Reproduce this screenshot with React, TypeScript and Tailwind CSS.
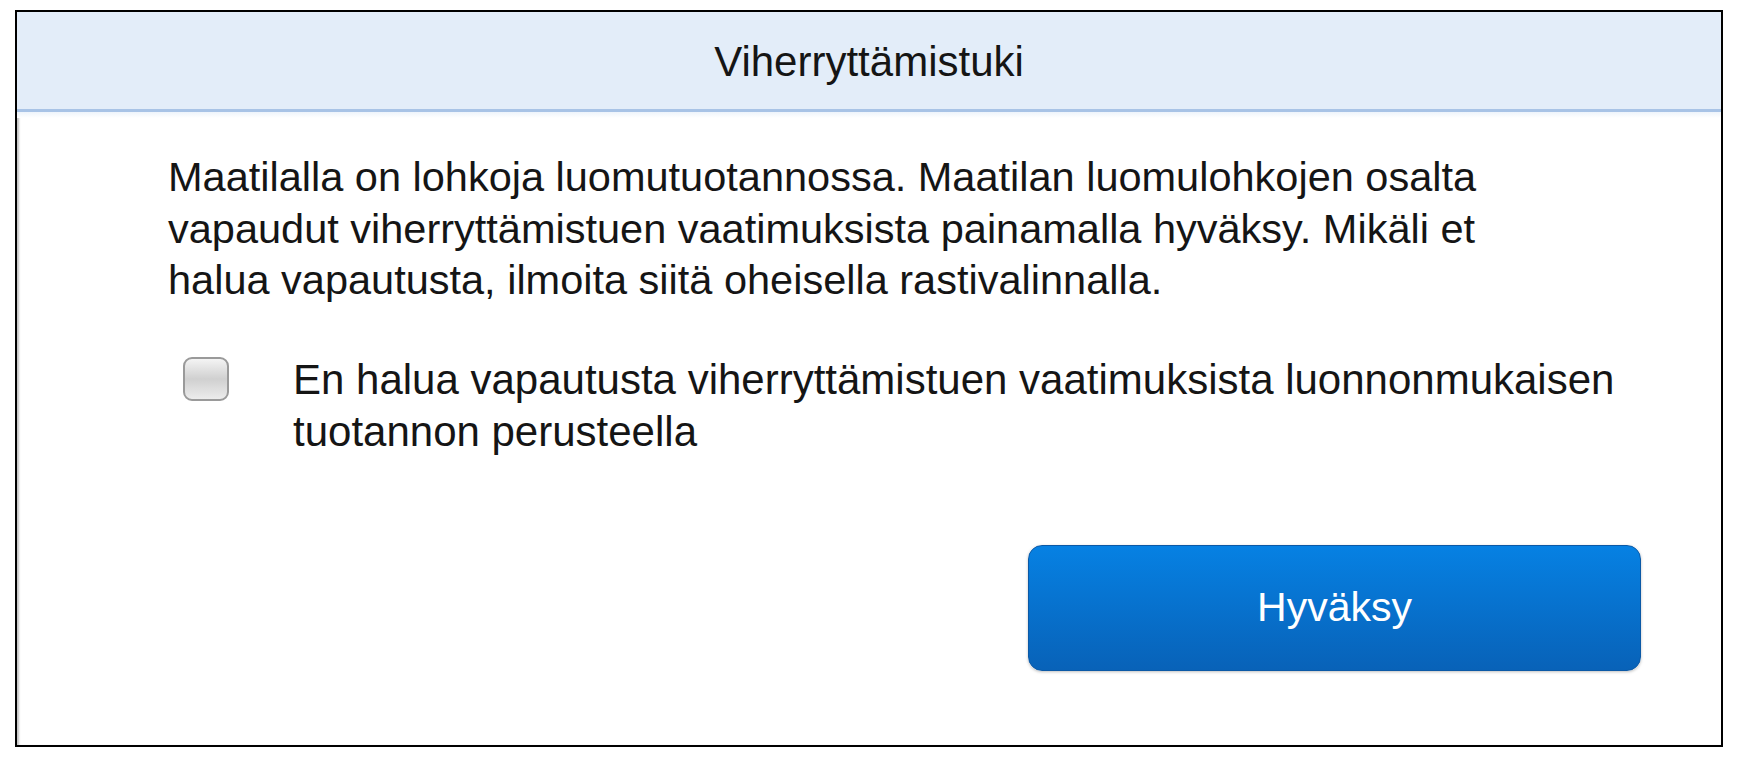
export default function App() {
  return (
    <div className="w-[1738px] h-[761px] bg-white pt-[10px] pl-[15px] font-['Liberation_Sans',Arial,sans-serif] text-[#151515]">
      <div className="w-[1708px] h-[737px] border-2 border-black bg-white flex flex-col shadow-[inset_3px_0_2px_-1px_#c4c4c4]">
        {/* header */}
        <div className="h-[100px] shrink-0 bg-[#e3edf9] border-b-[3px] border-[#a8c3e6] flex items-center justify-center">
          <h1 className="text-[42px] leading-none pt-[2px]">Viherryttämistuki</h1>
        </div>
        <div className="h-[6px] bg-gradient-to-b from-[#eef4fb] to-white" />

        <div className="pl-[151px] pt-[33px]">
          <p className="w-[1370px] text-[41.5px] leading-[51.5px]">
            Maatilalla on lohkoja luomutuotannossa. Maatilan luomulohkojen osalta vapaudut viherryttämistuen vaatimuksista painamalla hyväksy. Mikäli et halua vapautusta, ilmoita siitä oheisella rastivalinnalla.
          </p>

          <label className="flex items-start mt-[48px]">
            <span className="ml-[15px] mt-[3px] w-[46px] h-[44px] shrink-0 rounded-[9px] border-2 border-[#9a9a9a] bg-gradient-to-b from-[#f4f4f4] via-[#d0d0d0] to-[#ececec]" />
            <span className="ml-[64px] w-[1370px] text-[42px] leading-[52px]">
              En halua vapautusta viherryttämistuen vaatimuksista luonnonmukaisen tuotannon perusteella
            </span>
          </label>
        </div>

        <div className="flex justify-end pr-[80px] mt-[87px]">
          <button className="w-[613px] h-[126px] rounded-[14px] border border-[#0b59a6] bg-gradient-to-b from-[#0681e3] to-[#0862b8] text-white text-[41px] shadow-[0_1px_3px_rgba(0,0,0,0.25)]">
            Hyväksy
          </button>
        </div>
      </div>
    </div>
  );
}
